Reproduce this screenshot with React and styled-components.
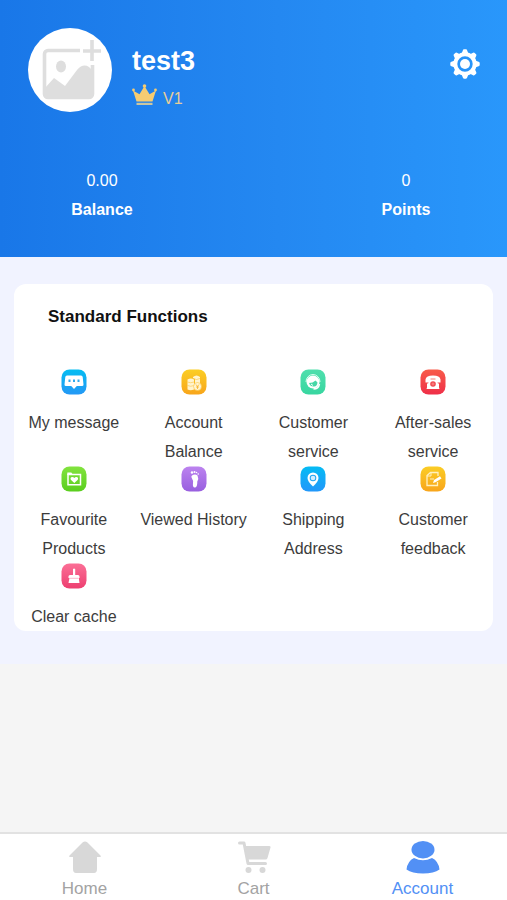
import { useState } from 'react';
import styled, { createGlobalStyle } from 'styled-components';

const GlobalStyle = createGlobalStyle`
  * {
    box-sizing: border-box;
  }

  body {
    margin: 0;
    background-color: #f5f5f5;
    font-family: 'Liberation Sans', Arial, Helvetica, sans-serif;
  }
`;

const Page = styled.div`
  display: flex;
  flex-direction: column;
  min-height: 100vh;
`;

const Header = styled.header`
  background: linear-gradient(to right, #1977e8, #2488f1 55%, #2997fb);
  color: white;
  padding: 28px 27px 33px 28px;
`;

const Profile = styled.div`
  display: flex;
  align-items: flex-start;
  margin-bottom: 52px;
`;

const Avatar = styled.button`
  width: 84px;
  height: 84px;
  padding: 0;
  border: none;
  border-radius: 50%;
  background-color: white;
  cursor: pointer;

  svg {
    display: block;
  }
`;

const UserInfo = styled.div`
  flex: 1;
  padding: 17px 0 0 20px;
`;

const UserName = styled.h1`
  margin: 0;
  font-size: 27px;
  line-height: 32px;
`;

const Level = styled.div`
  display: flex;
  align-items: center;
  gap: 6px;
  margin-top: 7px;
  color: #e5cd98;
  font-size: 16px;
  line-height: 30px;

  svg {
    margin-bottom: 8px;
  }
`;

const IconButton = styled.button`
  display: flex;
  margin-top: 21px;
  padding: 0;
  border: none;
  background: none;
  color: white;
  cursor: pointer;
`;

const Stats = styled.dl`
  display: flex;
  justify-content: space-between;
  margin: 0;
  padding: 0 18px;
`;

const Stat = styled.div`
  display: flex;
  flex-direction: column-reverse;
  width: 112px;
  text-align: center;
  font-size: 16px;
  line-height: 29px;

  dt {
    font-weight: bold;
  }

  dd {
    margin: 0;
  }
`;

const Content = styled.main`
  background-color: #f1f3ff;
  padding: 27px 14px 33px;
`;

const Card = styled.section`
  background-color: white;
  border-radius: 12px;
`;

const Title = styled.h2`
  margin: 0 0 19px;
  padding: 0 34px;
  color: #111;
  font-size: 17px;
  line-height: 66px;
`;

const FunctionGrid = styled.div`
  display: grid;
  grid-template-columns: repeat(4, 1fr);
`;

const FunctionLink = styled.a`
  display: flex;
  flex-direction: column;
  align-items: center;
  gap: 13px;
  padding: 0 4px;
  color: #3c3c3c;
  font-size: 16px;
  line-height: 29px;
  text-align: center;
  text-decoration: none;
`;

const TabBar = styled.nav`
  display: flex;
  margin-top: auto;
  background-color: white;
  border-top: 2px solid #e2e2e2;
`;

const Tab = styled.a`
  display: flex;
  flex: 1;
  flex-direction: column;
  align-items: center;
  gap: 3px;
  padding-top: 6px;
  color: ${(props) => (props.$active ? '#5290f5' : '#a3a3a3')};
  font-size: 17px;
  line-height: 23px;
  text-decoration: none;

  svg {
    color: ${(props) => (props.$active ? '#5290f5' : '#d8d8d8')};
  }
`;

const PictureIcon = () => (
  <svg width="84" height="84" viewBox="0 0 84 84" fill="none" aria-hidden="true">
    <path d="M52 22.500H20a3.500 3.500 0 0 0-3.500 3.500v40a3.500 3.500 0 0 0 3.500 3.500h41a3.500 3.500 0 0 0 3.500-3.500V37" stroke="#dedede" strokeWidth="3.600" />
    <path d="M55 23h18M64 12v21" stroke="#dedede" strokeWidth="3.600" />
    <ellipse cx="33" cy="38.500" rx="5" ry="6" fill="#dedede" />
    <path d="M17 60l9-10 11 8 12-16q6-7 12-3l4 4v26H17z" fill="#dedede" />
  </svg>
);

const CrownIcon = () => (
  <svg width="25" height="22" viewBox="0 0 25 22" fill="#f6cc72" aria-hidden="true">
    <path d="M4.500 17.500L1 6.500l6.500 3.800 5-8.300 5 8.300L24 6.500l-3.500 11z" />
    <circle cx="1.500" cy="6" r="1.400" />
    <circle cx="12.500" cy="2" r="1.800" />
    <circle cx="23.500" cy="6" r="1.400" />
    <path d="M4.500 18.800h16v2.200h-16z" fill="#c9c6a2" />
  </svg>
);

const GearIcon = () => (
  <svg width="30" height="30" viewBox="0 0 30 30" fill="none" aria-hidden="true">
    <circle cx="15" cy="15" r="9.700" stroke="currentColor" strokeWidth="4" />
    {[0, 45, 90, 135, 180, 225, 270, 315].map((angle) => (
      <path
        key={angle}
        d="M11.500 5l1.300-3.600q.3-1.100 1.200-1.100h2q.9 0 1.200 1.100L18.500 5z"
        fill="currentColor"
        transform={`rotate(${angle} 15 15)`}
      />
    ))}
    <circle cx="15" cy="15" r="5" fill="currentColor" />
  </svg>
);

// every function icon is a white glyph on a rounded gradient tile
const TileIcon = ({ id, from, to, children }) => (
  <svg width="26" height="26" viewBox="0 0 26 26" fill="none" aria-hidden="true">
    <defs>
      <linearGradient id={id} x1="0" y1="0" x2="0" y2="1">
        <stop stopColor={from} />
        <stop offset="1" stopColor={to} />
      </linearGradient>
    </defs>
    <rect x="0.500" y="0.500" width="25" height="25" rx="8" fill={`url(#${id})`} />
    {children}
  </svg>
);

const functions = [
  {
    id: 'message',
    label: 'My message',
    from: '#05bdf2',
    to: '#2498f5',
    glyph: (
      <>
        <path d="M6 6.500h14q1.500 0 1.700 1.500l.8 7.500q.1 1.500-1.500 1.500h-5.200L13 20l-2.800-3H5q-1.600 0-1.500-1.500L4.300 8q.2-1.500 1.700-1.500z" fill="white" />
        <path d="M8.500 10.500v2.500M13 10.500v2.500M17.500 10.500v2.500" stroke="#2da9ed" strokeWidth="2" />
      </>
    ),
  },
  {
    id: 'balance',
    label: 'Account Balance',
    from: '#fbce24',
    to: '#f8a51b',
    glyph: (
      <>
        <path d="M6.500 10.500q3.500-2 6.500 0v10q-3.500 1.500-6.500 0z" fill="#fff4cf" />
        <path d="M12 8q3.500-3 7 0v7h-5v-5l-2-1z" fill="#fff4cf" />
        <path d="M6.500 13q3 1.500 6.500 0M6.500 16.500q3 1.500 6.500 0M12 9.500q3.500 2 7 0" stroke="#fac33e" strokeWidth=".6" />
        <circle cx="16.500" cy="17.500" r="4" fill="#fff4cf" stroke="#fac33e" strokeWidth=".6" />
        <path d="M15 15.500l1.500 2 1.500-2M16.500 17v3M15 18h3" stroke="#f9b52a" strokeWidth=".8" />
      </>
    ),
  },
  {
    id: 'service',
    label: 'Customer service',
    from: '#4fdfad',
    to: '#38d6a0',
    glyph: (
      <>
        <circle cx="13" cy="13" r="6.500" fill="white" />
        <path d="M6 13a7 7.500 0 0 1 14 0" stroke="#dcfff2" />
        <path d="M9 14q4 0 6.500-2.500l2 2q-.5 4.500-4 4-3.500 0-4.500-3.500z" fill="#45d8a7" />
        <path d="M13.500 20q5 0 6-5" stroke="white" strokeWidth="1.500" />
        <path d="M11 15l2 1.500" stroke="white" />
      </>
    ),
  },
  {
    id: 'sales',
    label: 'After-sales service',
    from: '#f85b4a',
    to: '#ef2f48',
    glyph: (
      <>
        <path d="M5.500 10.500Q6 6.500 13 6.500t7.500 4v3H17l-.5-2.500h-7L9 13.500H5.500z" fill="white" />
        <path d="M9.500 10h7l3 10h-13z" fill="white" />
        <path d="M7 14.500h12V20H7z" fill="white" />
        <path d="M10.500 10h5" stroke="#f45a50" strokeWidth=".8" />
        <circle cx="13" cy="15" r="2.800" fill="#f04950" />
        <path d="M13 13.500v3M11.500 15h3" stroke="#ff9c97" strokeWidth=".7" />
      </>
    ),
  },
  {
    id: 'favourite',
    label: 'Favourite Products',
    from: '#82e33e',
    to: '#5ace1e',
    glyph: (
      <>
        <path d="M7 18.500V8.500h12.500v10.300H7z" stroke="white" strokeWidth="1.500" />
        <path d="M6.300 9V6.500h4l1.500 2" fill="white" />
        <path d="M13.300 17l-3.500-3.200q-1-2.800 1.500-2.800 1.300 0 2 1 .7-1 2-1 2.500 0 1.500 2.800z" fill="white" />
      </>
    ),
  },
  {
    id: 'history',
    label: 'Viewed History',
    from: '#bc83ef',
    to: '#985fdf',
    glyph: (
      <>
        <path d="M11 9.500q3-2 5.500 0 1.500 3-.2 6 .2 6-2.600 6-2.300-.2-1.700-4.500.4-2.500-1-4.500t0-3z" fill="white" />
        <circle cx="11" cy="6.500" r="1.200" fill="white" />
        <circle cx="13.500" cy="6" r="1" fill="white" />
        <circle cx="15.500" cy="6.500" r=".8" fill="white" />
        <circle cx="17.200" cy="8" r=".8" fill="white" />
      </>
    ),
  },
  {
    id: 'address',
    label: 'Shipping Address',
    from: '#05bbf4',
    to: '#2297fa',
    glyph: (
      <>
        <path d="M13 20.500q-5.500-5-5.500-8.500a5.500 5.500 0 0 1 11 0q0 3.500-5.500 8.500z" fill="white" />
        <circle cx="13" cy="12" r="3.300" fill="#22a5f3" />
        <circle cx="13" cy="12" r="2.300" fill="#d4efff" />
      </>
    ),
  },
  {
    id: 'feedback',
    label: 'Customer feedback',
    from: '#fbcd25',
    to: '#f8a51b',
    glyph: (
      <>
        <path d="M18 10V6.500h-7.500l-3.500 3V19.500h10.500V16" stroke="#fff0c0" strokeWidth="1.300" />
        <path d="M7 10h4V6.500M10 13h4" stroke="#fff0c0" />
        <path d="M13 17l1-3 6-3.700 1.500 2.300-6 3.700z" fill="white" />
      </>
    ),
  },
  {
    id: 'cache',
    label: 'Clear cache',
    from: '#fb6f96',
    to: '#ed3f70',
    glyph: (
      <>
        <path d="M12 6q1-1 2.200 0v6H17q1.500 0 1.500 1.500V15h-11v-1.500q0-1.500 1.500-1.500h3z" fill="white" />
        <path d="M8.500 15h9.300l.7 5h-11z" fill="white" />
        <path d="M8.500 15.300h9" stroke="#f899b4" strokeWidth=".7" />
      </>
    ),
  },
];

const tabs = [
  {
    name: 'Home',
    icon: <path d="M14.500 2.500q2.500-2 5 0l13 13q1 1.500-1 1.500H29v12q0 4-3 4H8q-3 0-3-4V17H2.500q-2 0-1-1.500z" />,
  },
  {
    name: 'Cart',
    icon: (
      <>
        <path d="M2.500 3h4.500l4 20.500h17.500" fill="none" stroke="currentColor" strokeWidth="3" strokeLinecap="round" strokeLinejoin="round" />
        <path d="M7 6h25q2 0 1.500 1.500L30.500 18q-.5 1.500-2 1.500H9.500z" />
        <circle cx="11.500" cy="30" r="3" />
        <circle cx="25.500" cy="30" r="3" />
      </>
    ),
  },
  {
    name: 'Account',
    icon: (
      <>
        <ellipse cx="17" cy="9.700" rx="11.500" ry="8.700" />
        <path d="M8 18q9 4.500 18 0 6.500 3 7.500 11.500Q28 33.500 17 33.500T.5 29.500Q1.500 21 8 18z" />
      </>
    ),
  },
];

const App = () => {
  const [activeTab, setActiveTab] = useState('Account');

  return (
    <Page>
      <GlobalStyle />
      <Header>
        <Profile>
          <Avatar type="button" aria-label="Change picture">
            <PictureIcon />
          </Avatar>
          <UserInfo>
            <UserName>test3</UserName>
            <Level>
              <CrownIcon />
              V1
            </Level>
          </UserInfo>
          <IconButton type="button" aria-label="Settings">
            <GearIcon />
          </IconButton>
        </Profile>
        <Stats>
          <Stat>
            <dt>Balance</dt>
            <dd>0.00</dd>
          </Stat>
          <Stat>
            <dt>Points</dt>
            <dd>0</dd>
          </Stat>
        </Stats>
      </Header>

      <Content>
        <Card>
          <Title>Standard Functions</Title>
          <FunctionGrid>
            {functions.map((item) => (
              <FunctionLink key={item.id} href={`#${item.id}`}>
                <TileIcon id={`tile-${item.id}`} from={item.from} to={item.to}>
                  {item.glyph}
                </TileIcon>
                <span>{item.label}</span>
              </FunctionLink>
            ))}
          </FunctionGrid>
        </Card>
      </Content>

      <TabBar>
        {tabs.map((tab) => (
          <Tab
            key={tab.name}
            href={`#${tab.name.toLowerCase()}`}
            $active={activeTab === tab.name}
            onClick={() => setActiveTab(tab.name)}
          >
            <svg width="34" height="34" viewBox="0 0 34 34" fill="currentColor" aria-hidden="true">
              {tab.icon}
            </svg>
            {tab.name}
          </Tab>
        ))}
      </TabBar>
    </Page>
  );
};

export default App;
